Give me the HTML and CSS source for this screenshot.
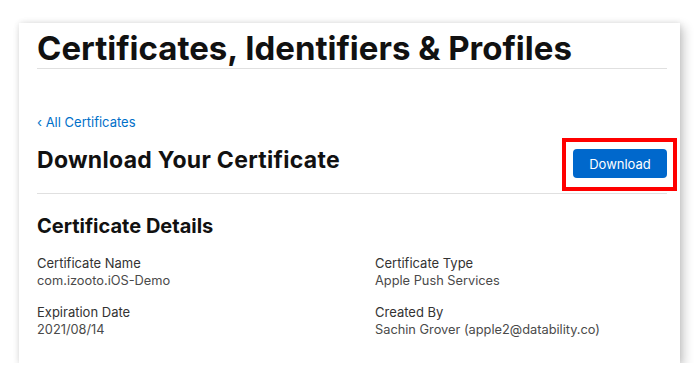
FILE: index.html
```html
<!DOCTYPE html>
<html lang="en">
<head>
    <meta charset="UTF-8">
    <meta name="viewport" content="width=device-width, initial-scale=1.0">
    <title>Download Your Certificate</title>
    <link rel="stylesheet" href="styles.css">
</head>
<body>

    <div class="card">
        <h1 class="page-title">Certificates, Identifiers &amp; Profiles</h1>

        <a class="back-link" href="#">&lsaquo; All Certificates</a>

        <div class="title-row">
            <h2>Download Your Certificate</h2>
            <span class="highlight">
                <button class="btn-download" type="button">Download</button>
            </span>
        </div>

        <h3 class="section-title">Certificate Details</h3>

        <div class="details">
            <div class="detail">
                <div class="detail-label">Certificate Name</div>
                <div class="detail-value">com.izooto.iOS-Demo</div>
            </div>
            <div class="detail">
                <div class="detail-label">Certificate Type</div>
                <div class="detail-value">Apple Push Services</div>
            </div>
            <div class="detail">
                <div class="detail-label">Expiration Date</div>
                <div class="detail-value">2021/08/14</div>
            </div>
            <div class="detail">
                <div class="detail-label">Created By</div>
                <div class="detail-value">Sachin Grover (apple2@datability.co)</div>
            </div>
        </div>
    </div>

</body>
</html>
```

FILE: styles.css
```css
body {
    margin: 0;
    background: #ffffff;
    font-family: Inter, "Liberation Sans", sans-serif;
    color: #1d1d1f;
}
.card {
    box-sizing: border-box;
    width: 661px;
    height: 340px;
    margin: 23px 0 0 19px;
    padding: 6px 13px 0 18px;
    background: #ffffff;
    box-shadow: 4px 4px 10px rgba(0, 0, 0, 0.2), 0 0 6px rgba(0, 0, 0, 0.1);
}
.page-title {
    margin: 0;
    font-size: 33px;
    line-height: 39px;
    font-weight: 700;
    color: #111111;
    border-bottom: 1px solid #e0e0e0;
}
.back-link {
    display: block;
    margin-top: 44px;
    font-size: 13px;
    line-height: 18px;
    color: #0070c9;
    text-decoration: none;
}
.title-row {
    display: flex;
    justify-content: space-between;
    align-items: flex-start;
    margin-top: 14px;
    padding-bottom: 15px;
    border-bottom: 1px solid #e0e0e0;
}
.title-row h2 {
    margin: 1px 0 0;
    font-size: 23px;
    line-height: 28px;
    font-weight: 700;
    letter-spacing: 0.3px;
    color: #111111;
}
.highlight {
    position: relative;
    display: block;
    margin-top: 4px;
}
.highlight::after {
    content: "";
    position: absolute;
    top: -11px;
    right: -10px;
    bottom: -13px;
    left: -11px;
    border: 4px solid #ff0000;
}
.btn-download {
    display: block;
    width: 94px;
    height: 29px;
    background: #0068cc;
    color: #ffffff;
    border: none;
    border-radius: 4px;
    font-family: inherit;
    font-size: 13px;
    cursor: pointer;
}
.section-title {
    margin: 20px 0 0;
    font-size: 20px;
    line-height: 24px;
    font-weight: 700;
    color: #111111;
}
.details {
    display: grid;
    grid-template-columns: 338px 1fr;
    row-gap: 13px;
    margin-top: 16px;
}
.detail-label {
    font-size: 13px;
    line-height: 18px;
    color: #333333;
}
.detail-value {
    font-size: 12.8px;
    line-height: 18px;
    color: #4a4a4a;
}
```
